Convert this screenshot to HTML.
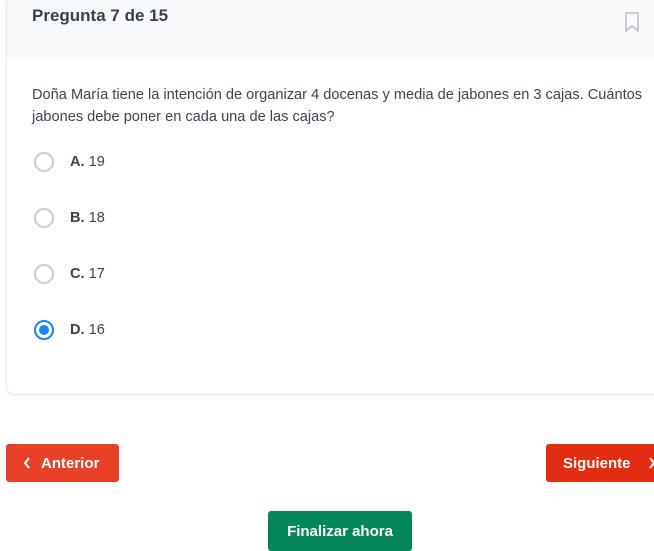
<!DOCTYPE html>
<html><head><meta charset="utf-8"><style>
*{margin:0;padding:0;box-sizing:border-box}
body{width:654px;height:545px;overflow:hidden;background:#fff;font-family:"Liberation Sans",sans-serif;color:#3d4451;position:relative}
.card{position:absolute;left:6px;top:-10px;width:700px;height:405px;border:1px solid #e6e8ec;border-radius:8px;background:#fff;box-shadow:0 2px 6px rgba(0,0,0,.04);overflow:hidden}
.head{position:absolute;left:0;top:0;right:0;height:68px;background:#f8f9fb}
.title{position:absolute;left:25px;top:15px;font-size:17px;font-weight:bold;color:#3a414c}
.bm{position:absolute;left:617px;top:21px}
.q{position:absolute;left:25px;top:93px;width:630px;font-size:14.6px;line-height:22px;color:#3d4451}
.opt{position:absolute;left:27px;font-size:14.6px;display:flex;align-items:center}
.r{width:20px;height:20px;border:2px solid #c9ccd2;border-radius:50%;margin-right:16px}
.r.on{border-color:#1a86f0;display:flex;align-items:center;justify-content:center}
.r.on::after{content:"";width:10px;height:10px;border-radius:50%;background:#1a86f0}
.btn{position:absolute;color:#fff;font-weight:bold;font-size:15px;border-radius:3px;display:flex;align-items:center}
</style></head><body>
<div class="card">
<div class="head"></div>
<div class="title">Pregunta 7 de 15</div>
<svg class="bm" width="16" height="20" viewBox="0 0 16 20"><path d="M2 1h12v18l-6-5-6 5z" fill="none" stroke="#c3c7cd" stroke-width="1.8" stroke-linejoin="round"/></svg>
<div class="q">Doña María tiene la intención de organizar 4 docenas y media de jabones en 3 cajas. Cuántos jabones debe poner en cada una de las cajas?</div>
<div class="opt" style="top:161px"><div class="r"></div><b>A.</b>&nbsp;19</div>
<div class="opt" style="top:217px"><div class="r"></div><b>B.</b>&nbsp;18</div>
<div class="opt" style="top:273px"><div class="r"></div><b>C.</b>&nbsp;17</div>
<div class="opt" style="top:329px"><div class="r on"></div><b>D.</b>&nbsp;16</div>
</div>
<div class="btn" style="left:6px;top:444px;width:113px;height:38px;background:#e8412a;padding-left:17px">
<svg width="8" height="12" viewBox="0 0 8 12"><path d="M6 1L2 6l4 5" fill="none" stroke="#fff" stroke-width="2"/></svg><span style="margin-left:10px">Anterior</span></div>
<div class="btn" style="left:546px;top:444px;width:120px;height:38px;background:#e22d12;padding-left:17px">Siguiente<svg style="margin-left:17px" width="8" height="12" viewBox="0 0 8 12"><path d="M2 1l4 5-4 5" fill="none" stroke="#fff" stroke-width="2"/></svg></div>
<div class="btn" style="left:268px;top:511px;width:144px;height:40px;background:#03865a;justify-content:center;padding-top:0px">Finalizar ahora</div>
</body></html>
